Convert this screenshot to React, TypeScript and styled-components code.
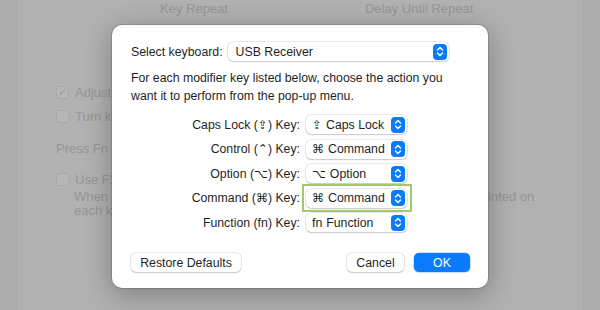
import React from 'react';
import styled, { createGlobalStyle } from 'styled-components';

const GlobalStyle = createGlobalStyle`
    html, body {
        margin: 0;
        padding: 0;
        background: #b2b2b2;
    }
    body {
        font-family: "Liberation Sans", "DejaVu Sans", Arial, sans-serif;
        -webkit-font-smoothing: antialiased;
    }
`;

const Screen = styled.div`
    position: relative;
    width: 600px;
    height: 310px;
    overflow: hidden;
    background: #b2b2b2;
    padding: 0 16px;
    box-sizing: border-box;
`;

const Window = styled.div`
    height: 100%;
    background: #b5b5b5;
    border-left: 1px solid #adadad;
    border-right: 1px solid #adadad;
    color: #9a9a9a;
    font-size: 13px;
    padding-left: 39px;
    box-sizing: border-box;
`;

const SliderTitles = styled.div`
    display: flex;
    padding-left: 104px;
    gap: 137px;
    height: 17px;
    line-height: 17px;
`;

const Options = styled.div`
    display: flex;
    flex-direction: column;
    margin-top: 67px;
`;

const CheckRow = styled.div<{ $top?: number }>`
    display: flex;
    align-items: center;
    gap: 6px;
    height: 17px;
    margin-top: ${p => p.$top ?? 0}px;
    white-space: nowrap;
`;

const BgBox = styled.span`
    width: 11px;
    height: 11px;
    border-radius: 3px;
    background: #bababa;
    border: 1px solid #acacac;
    display: flex;
    align-items: center;
    justify-content: center;
    font-size: 11px;
    color: #9a9a9a;
`;

const BgText = styled.div<{ $top?: number; $indent?: number }>`
    height: 14px;
    line-height: 14px;
    margin-top: ${p => p.$top ?? 0}px;
    padding-left: ${p => p.$indent ?? 0}px;
    white-space: nowrap;
`;

const Backdrop = styled.div`
    position: absolute;
    inset: 0;
    background: rgba(0, 0, 0, 0.02);
`;

const Dialog = styled.div`
    position: absolute;
    left: 112px;
    top: 25px;
    width: 376px;
    box-sizing: border-box;
    background: #ffffff;
    border-radius: 10px;
    box-shadow: 0 0 0 1px rgba(0, 0, 0, 0.12), 0 6px 28px rgba(0, 0, 0, 0.3);
    padding: 17px 40px 16px 19px;
    color: #1f1f1f;
    font-size: 12.3px;
`;

const TopRow = styled.div`
    display: flex;
    align-items: center;
    gap: 5px;
    height: 19px;
    white-space: nowrap;
`;

const Popup = styled.div<{ $width: number; $pad?: number }>`
    position: relative;
    flex-shrink: 0;
    width: ${p => p.$width}px;
    height: 19px;
    box-sizing: border-box;
    background: #fff;
    border-radius: 5px;
    box-shadow: 0 0 0 0.5px rgba(0, 0, 0, 0.18), 0 1px 1.5px rgba(0, 0, 0, 0.14);
    display: flex;
    align-items: center;
    padding-left: ${p => p.$pad ?? 6}px;
    white-space: nowrap;
`;

const Stepper = styled.span`
    position: absolute;
    right: 2px;
    top: 1.5px;
    width: 14px;
    height: 16px;
    border-radius: 4px;
    background: #0b7bfe;
    display: flex;
    align-items: center;
    justify-content: center;
`;

const Glyph = styled.span`
    font-family: "DejaVu Sans", sans-serif;
    font-size: 12px;
    margin-right: 4px;
`;

const FnGlyph = styled.span`
    margin-right: 4px;
`;

const LabelGlyph = styled.span`
    font-family: "DejaVu Sans", sans-serif;
    font-size: 12px;
`;

const Intro = styled.p`
    margin: 8px 0 0;
    line-height: 18px;
    width: 320px;
`;

const KeyGrid = styled.div`
    display: grid;
    grid-template-columns: 169px 101px;
    column-gap: 6px;
    row-gap: 4.5px;
    margin-top: 9.5px;
    align-items: center;
`;

const KeyLabel = styled.div`
    text-align: right;
    white-space: nowrap;
    height: 20px;
    line-height: 20px;
`;

const PopupWrap = styled.div<{ $focus?: boolean }>`
    position: relative;
    height: 20px;
    display: flex;
    align-items: center;
    &::after {
        content: '';
        display: ${p => (p.$focus ? 'block' : 'none')};
        position: absolute;
        left: -4px;
        right: -5px;
        top: -4px;
        bottom: -4px;
        border: 2px solid #a2c86c;
        border-radius: 1px;
    }
`;

const Footer = styled.div`
    display: flex;
    align-items: center;
    margin-top: 20.5px;
    margin-right: -22px;
`;

const Spacer = styled.div`
    flex: 1;
`;

const Button = styled.button<{ $primary?: boolean; $width: number }>`
    width: ${p => p.$width}px;
    height: 19px;
    border: none;
    border-radius: 5px;
    font-family: inherit;
    font-size: 12.3px;
    padding: 0;
    margin-left: ${p => (p.$primary ? 10 : 0)}px;
    color: ${p => (p.$primary ? '#fff' : '#1f1f1f')};
    background: ${p => (p.$primary ? '#0b7bfe' : '#fff')};
    box-shadow: ${p =>
        p.$primary
            ? '0 0 0 0.5px rgba(0, 90, 220, 0.4)'
            : '0 0 0 0.5px rgba(0, 0, 0, 0.18), 0 1px 1.5px rgba(0, 0, 0, 0.14)'};
`;

function StepperIcon() {
    return (
        <Stepper>
            <svg width="8" height="11" viewBox="0 0 8 11" fill="none">
                <path d="M1.5 4 L4 1.5 L6.5 4" stroke="#fff" strokeWidth="1.4" strokeLinecap="round" strokeLinejoin="round" />
                <path d="M1.5 7 L4 9.5 L6.5 7" stroke="#fff" strokeWidth="1.4" strokeLinecap="round" strokeLinejoin="round" />
            </svg>
        </Stepper>
    );
}

const rows = [
    { label: 'Caps Lock', sym: '⇪', glyph: '⇪', value: 'Caps Lock' },
    { label: 'Control', sym: '⌃', glyph: '⌘', value: 'Command' },
    { label: 'Option', sym: '⌥', glyph: '⌥', value: 'Option' },
    { label: 'Command', sym: '⌘', glyph: '⌘', value: 'Command', focus: true },
    { label: 'Function', sym: 'fn', glyph: 'fn', value: 'Function' },
];

export default function App() {
    return (
        <>
            <GlobalStyle />
            <Screen>
                <Window>
                    <SliderTitles>
                        <span>Key Repeat</span>
                        <span>Delay Until Repeat</span>
                    </SliderTitles>
                    <Options>
                        <CheckRow>
                            <BgBox>✓</BgBox>
                            Adjust keyboard brightness in low light
                        </CheckRow>
                        <CheckRow $top={7}>
                            <BgBox />
                            Turn keyboard backlight off after inactivity
                        </CheckRow>
                        <BgText $top={17}>Press Fn key to Show Emoji &amp; Symbols</BgText>
                        <CheckRow $top={15}>
                            <BgBox />
                            Use F1, F2, etc. keys as standard function keys
                        </CheckRow>
                        <BgText $top={2} $indent={18}>
                            When this option is selected, press the Fn key to use special features printed on
                        </BgText>
                        <BgText $indent={18}>each key.</BgText>
                    </Options>
                </Window>
                <Backdrop />
                <Dialog>
                    <TopRow>
                        <span>Select keyboard:</span>
                        <Popup $width={221} $pad={8}>
                            USB Receiver
                            <StepperIcon />
                        </Popup>
                    </TopRow>
                    <Intro>
                        For each modifier key listed below, choose the action you want it to perform from the pop-up menu.
                    </Intro>
                    <KeyGrid>
                        {rows.map(r => (
                            <React.Fragment key={r.label}>
                                <KeyLabel>
                                    {r.label} ({r.sym === 'fn' ? 'fn' : <LabelGlyph>{r.sym}</LabelGlyph>}) Key:
                                </KeyLabel>
                                <PopupWrap $focus={r.focus}>
                                    <Popup $width={101}>
                                        {r.glyph === 'fn' ? <FnGlyph>fn</FnGlyph> : <Glyph>{r.glyph}</Glyph>}
                                        {r.value}
                                        <StepperIcon />
                                    </Popup>
                                </PopupWrap>
                            </React.Fragment>
                        ))}
                    </KeyGrid>
                    <Footer>
                        <Button $width={110}>Restore Defaults</Button>
                        <Spacer />
                        <Button $width={57}>Cancel</Button>
                        <Button $primary $width={56}>OK</Button>
                    </Footer>
                </Dialog>
            </Screen>
        </>
    );
}
